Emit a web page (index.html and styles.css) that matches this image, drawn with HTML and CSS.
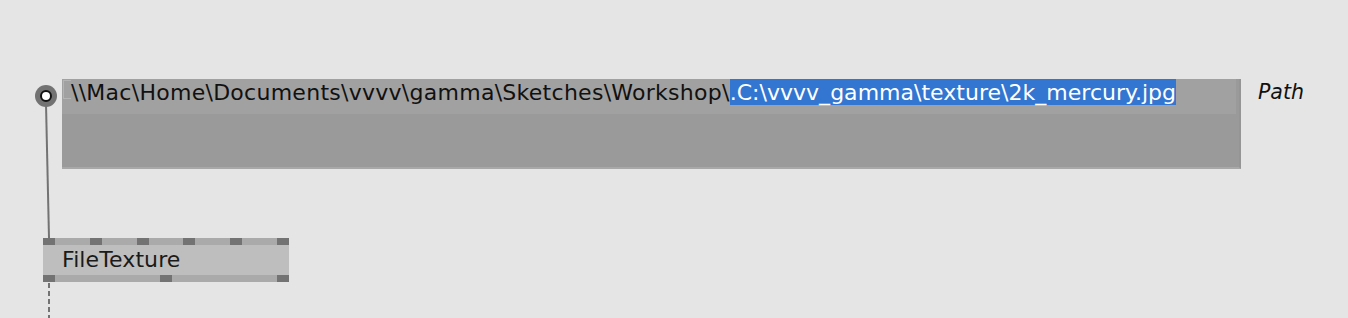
FILE: index.html
```html
<!DOCTYPE html>
<html>
<head>
<meta charset="utf-8">
<link rel="stylesheet" href="styles.css">
</head>
<body>
<div class="canvas">
  <svg class="wires" width="1348" height="318" viewBox="0 0 1348 318">
    <line x1="46" y1="104" x2="49" y2="238" stroke="#737373" stroke-width="2"/>
    <line x1="49" y1="283" x2="49" y2="318" stroke="#737373" stroke-width="2" stroke-dasharray="5 3"/>
  </svg>
  <div class="pin"><div class="pin-dot"></div></div>
  <div class="iobox">
    <div class="iobox-line">
      <span class="caret-box"></span><span class="path-text">\\Mac\Home\Documents\vvvv\gamma\Sketches\Workshop\</span><span class="sel">.C:\vvvv_gamma\texture\2k_mercury.jpg</span>
    </div>
  </div>
  <div class="label">Path</div>
  <div class="node">
    <div class="node-pins">
      <span class="p"></span><span class="p"></span><span class="p"></span><span class="p"></span><span class="p"></span><span class="p"></span>
    </div>
    <div class="node-body">FileTexture</div>
    <div class="node-pins">
      <span class="p"></span><span class="p"></span><span class="p"></span>
    </div>
  </div>
</div>
</body>
</html>
```
FILE: styles.css
```css
html, body {
  margin: 0;
  padding: 0;
  background: #e5e5e5;
}
.canvas {
  position: relative;
  width: 1348px;
  height: 318px;
  overflow: hidden;
  font-family: "DejaVu Sans", "Liberation Sans", sans-serif;
}
.wires {
  position: absolute;
  left: 0;
  top: 0;
}
.pin {
  position: absolute;
  left: 35px;
  top: 85px;
  width: 22px;
  height: 22px;
  border-radius: 50%;
  background: #727272;
  display: flex;
  align-items: center;
  justify-content: center;
}
.pin-dot {
  width: 8px;
  height: 8px;
  border-radius: 50%;
  background: #fff;
  border: 2px solid #111;
}
.iobox {
  position: absolute;
  left: 62px;
  top: 79px;
  width: 1177px;
  height: 88px;
  background: #9a9a9a;
  border-right: 2px solid #959595;
  border-bottom: 2px solid #a8a8a8;
}
.iobox-line {
  width: 1174px;
  height: 35px;
  background: #a1a1a1;
  display: flex;
  align-items: flex-start;
  font-size: 22px;
  line-height: 26px;
  color: #111;
  white-space: nowrap;
}
.caret-box {
  width: 8px;
  height: 19px;
  margin: 1px 0 0 1px;
  border: 1px solid #b4b4b4;
  border-right: none;
  box-sizing: border-box;
}
.path-text {
  padding-top: 1px;
  letter-spacing: 0.27px;
}
.sel {
  background: #3276d1;
  color: #fff;
  height: 25px;
  padding-top: 1px;
  letter-spacing: 0.02px;
}
.label {
  position: absolute;
  left: 1258px;
  top: 80px;
  font-size: 20.5px;
  font-style: italic;
  color: #111;
}
.node {
  position: absolute;
  left: 43px;
  top: 238px;
  width: 246px;
  display: flex;
  flex-direction: column;
}
.node-pins {
  height: 7px;
  background: #aaaaaa;
  display: flex;
  justify-content: space-between;
}
.node-pins .p {
  width: 12px;
  height: 7px;
  background: #737373;
}
.node-body {
  height: 30px;
  background: #bebebe;
  font-size: 22px;
  line-height: 29px;
  letter-spacing: 0.1px;
  padding-left: 19px;
  color: #1a1a1a;
}
```
